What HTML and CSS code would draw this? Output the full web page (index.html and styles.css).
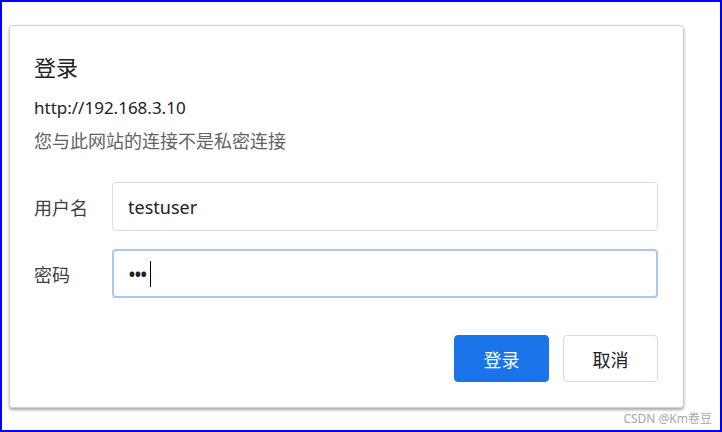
FILE: index.html
```html
<!DOCTYPE html>
<html lang="zh-CN">
<head>
<meta charset="utf-8">
<title>登录</title>
<link rel="stylesheet" href="styles.css">
</head>
<body>
<div class="frame">
  <div class="dialog">
    <div class="title">登录</div>
    <div class="origin">http://192.168.3.10</div>
    <div class="note">您与此网站的连接不是私密连接</div>
    <div class="form">
      <div class="row">
        <div class="label">用户名</div>
        <div class="field">testuser</div>
      </div>
      <div class="row">
        <div class="label">密码</div>
        <div class="field focus"><span class="dots">•••</span><span class="caret"></span></div>
      </div>
    </div>
    <div class="actions">
      <div class="btn primary">登录</div>
      <div class="btn">取消</div>
    </div>
  </div>
  <div class="mark">CSDN @Km卷豆</div>
</div>
</body>
</html>
```
FILE: styles.css
```css
* { box-sizing: border-box; }
html, body { margin: 0; padding: 0; background: #fff; }
body {
  font-family: "Noto Sans", "Noto Sans CJK SC", sans-serif;
  color: #202124;
}
.frame {
  width: 722px;
  height: 432px;
  border: 2px solid #0000ff;
  padding: 23px 0 0 7px;
}
.dialog {
  width: 675px;
  height: 383px;
  border: 1px solid #d0d0d0;
  border-radius: 4px;
  box-shadow: 0 2px 3px rgba(0,0,0,0.35);
  padding: 26px 25px 0 24px;
}
.title {
  font-size: 22px;
  line-height: 30px;
  color: #202124;
}
.origin {
  font-size: 17px;
  line-height: 24px;
  margin-top: 14px;
  color: #202124;
}
.note {
  font-size: 18px;
  line-height: 24px;
  margin-top: 9px;
  color: #5f6368;
}
.form {
  margin-top: 29px;
  display: flex;
  flex-direction: column;
  gap: 18px;
}
.row {
  display: flex;
  align-items: center;
}
.label {
  width: 78px;
  font-size: 18px;
  color: #3c4043;
}
.field {
  flex: 1;
  height: 49px;
  border: 1px solid #dadce0;
  border-radius: 4px;
  padding-left: 15px;
  display: flex;
  align-items: center;
  font-size: 18px;
  color: #202124;
}
.field.focus {
  border: 2px solid #a8c7fa;
  padding-left: 14px;
}
.dots {
  font-size: 21px;
  letter-spacing: -2px;
  color: #202124;
}
.caret {
  display: inline-block;
  width: 1px;
  height: 26px;
  background: #000;
  margin-left: 4px;
}
.actions {
  display: flex;
  justify-content: flex-end;
  gap: 14px;
  margin-top: 37px;
}
.btn {
  width: 95px;
  height: 47px;
  border: 1px solid #dadce0;
  border-radius: 4px;
  display: flex;
  align-items: center;
  justify-content: center;
  font-size: 18px;
  color: #202124;
  background: #fff;
}
.btn.primary {
  background: #1a73e8;
  border-color: #1a73e8;
  color: #fff;
}
.mark {
  text-align: right;
  padding-right: 8px;
  margin-top: 2px;
  font-size: 12px;
  line-height: 18px;
  color: #a8a8a8;
}
```
